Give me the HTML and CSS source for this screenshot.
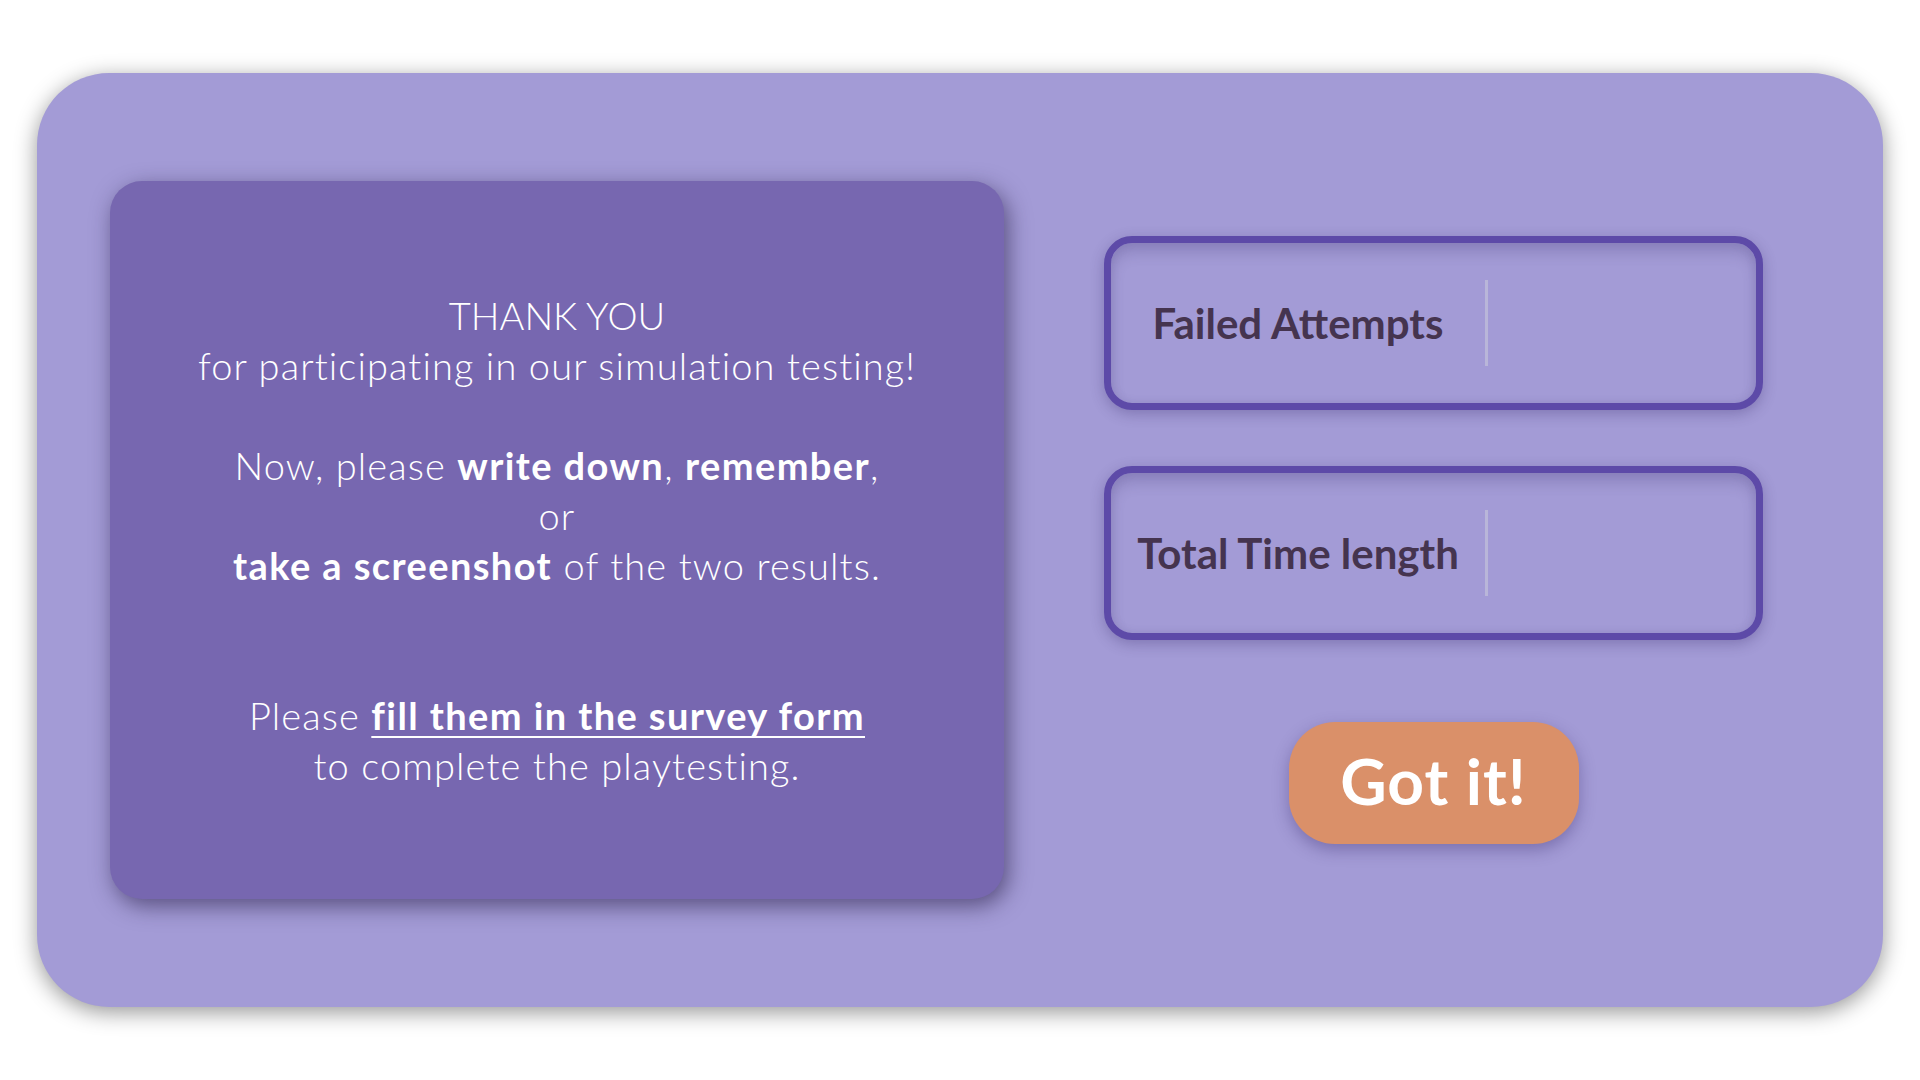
FILE: index.html
```html
<!DOCTYPE html>
<html lang="en">
<head>
<meta charset="utf-8">
<title>Thank you</title>
<link rel="stylesheet" href="styles.css">
</head>
<body>
<main class="panel">
  <section class="message">
    <div class="message-text">
      <p class="line title">THANK YOU</p>
      <p class="line">for participating in our simulation testing!</p>
      <p class="line blank">&nbsp;</p>
      <p class="line">Now, please <b>write down</b>, <b>remember</b>,</p>
      <p class="line">or</p>
      <p class="line"><b>take a screenshot</b> of the two results.</p>
      <p class="line blank">&nbsp;</p>
      <p class="line blank">&nbsp;</p>
      <p class="line">Please <a class="survey-link" href="#"><b>fill them in the survey form</b></a></p>
      <p class="line">to complete the playtesting.</p>
    </div>
  </section>
  <section class="results">
    <div class="result-box">
      <div class="result-label">Failed Attempts</div>
      <div class="result-divider"></div>
      <div class="result-value"></div>
    </div>
    <div class="result-box">
      <div class="result-label">Total Time length</div>
      <div class="result-divider"></div>
      <div class="result-value"></div>
    </div>
    <button class="got-it" type="button">Got it!</button>
  </section>
</main>
</body>
</html>
```
FILE: styles.css
```css
* { box-sizing: border-box; }

html, body {
  margin: 0;
  padding: 0;
  background: #ffffff;
}

body {
  width: 1920px;
  height: 1080px;
  display: flex;
  align-items: center;
  justify-content: center;
  font-family: Lato, "Noto Sans", sans-serif;
}

.panel {
  width: 1846px;
  height: 934px;
  background: #a39bd6;
  border-radius: 72px;
  box-shadow: 0 5px 22px rgba(0, 0, 0, 0.42);
  display: flex;
  align-items: stretch;
  padding: 108px 120px 108px 73px;
}

.message {
  width: 894px;
  flex: none;
  background: #7767b0;
  border-radius: 32px;
  box-shadow: 4px 7px 22px rgba(40, 30, 70, 0.6);
  display: flex;
  align-items: center;
  justify-content: center;
  color: #ffffff;
}

.message-text {
  text-align: center;
  font-size: 38px;
  font-weight: 300;
  letter-spacing: 1.1px;
}

.line {
  margin: 0;
  height: 50px;
  line-height: 50px;
  white-space: nowrap;
}

.line.title {
  letter-spacing: 0px;
}

.line b {
  font-weight: 700;
  letter-spacing: 1.4px;
}

.survey-link {
  color: #ffffff;
  text-decoration: underline;
  text-decoration-thickness: 2px;
  text-underline-offset: 6px;
}

.results {
  flex: 1;
  margin-left: 100px;
  display: flex;
  flex-direction: column;
  align-items: center;
  justify-content: center;
}

.result-box {
  width: 659px;
  height: 174px;
  border: 7px solid #5d4aa8;
  border-radius: 28px;
  background: #a39bd6;
  box-shadow: 0 4px 14px rgba(50, 35, 100, 0.3), inset 0 10px 14px rgba(60, 50, 110, 0.2), inset 0 0 10px rgba(60, 50, 110, 0.12);
  display: flex;
  align-items: center;
}

.result-box + .result-box {
  margin-top: 56px;
}

.result-label {
  width: 374px;
  text-align: center;
  font-weight: 700;
  font-size: 42px;
  color: #45344f;
  white-space: nowrap;
}

.result-divider {
  width: 3px;
  height: 86px;
  background: #b9b6d9;
}

.result-value {
  flex: 1;
}

.got-it {
  margin-top: 82px;
  width: 290px;
  height: 122px;
  border: none;
  border-radius: 46px;
  background: #da9069;
  color: #ffffff;
  font-family: Lato, "Noto Sans", sans-serif;
  font-weight: 700;
  font-size: 64px;
  letter-spacing: 1px;
  line-height: 1;
  box-shadow: 0 6px 16px rgba(50, 35, 100, 0.35);
  padding: 0 0 4px 0;
  cursor: pointer;
}
```
